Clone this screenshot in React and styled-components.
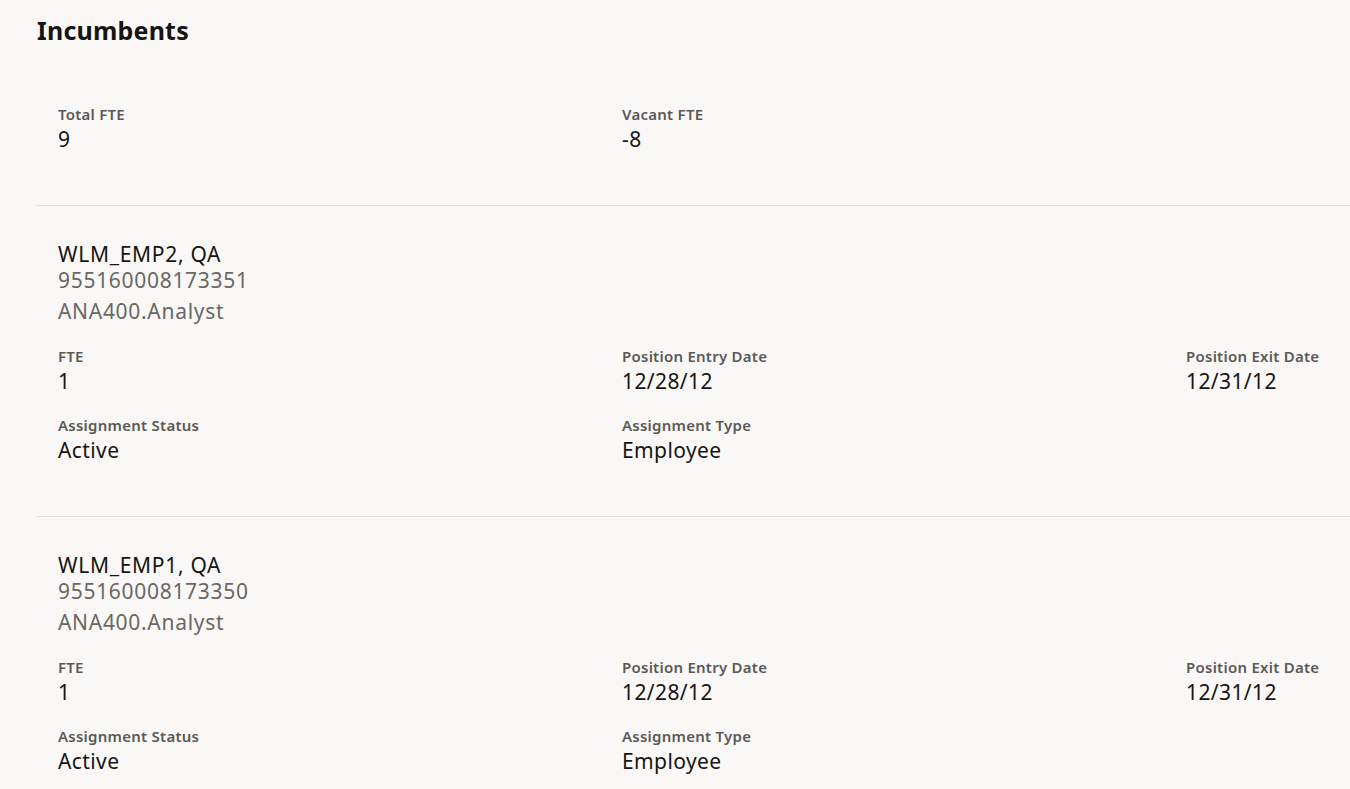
import React from 'react';
import styled, { createGlobalStyle } from 'styled-components';

const GlobalStyle = createGlobalStyle`
  html, body {
    margin: 0;
    padding: 0;
    background: #f9f8f6;
    overflow: hidden;
  }
  body {
    font-family: "Noto Sans", "Open Sans", sans-serif;
    color: #161513;
  }
`;

const Page = styled.div`
  padding: 14px 0 0 36px;
`;

const Title = styled.h1`
  margin: 0;
  font-size: 25px;
  line-height: 32px;
  font-weight: 700;
  letter-spacing: 0.2px;
  padding-left: 1px;
  color: #161513;
`;

const Section = styled.section`
  padding: ${({ top }) => top}px 0 ${({ bottom }) => bottom}px 22px;
  border-bottom: ${({ divider }) => (divider ? '1px solid #e0dedb' : 'none')};
`;

const Grid = styled.div`
  display: grid;
  grid-template-columns: 564px 564px 1fr;
  row-gap: 23px;
`;

const Field = styled.div`
  display: flex;
  flex-direction: column;
  gap: 4px;
`;

const Label = styled.div`
  font-size: 15px;
  line-height: 18px;
  font-weight: 600;
  letter-spacing: 0.25px;
  color: #5b5956;
`;

const Value = styled.div`
  font-size: 21px;
  line-height: 24px;
  letter-spacing: 0.4px;
  color: #161513;
`;

const Header = styled.div`
  display: flex;
  flex-direction: column;
  margin-bottom: 23px;
`;

const Name = styled.div`
  font-size: 21px;
  line-height: 26px;
  letter-spacing: 0.7px;
  color: ${({ muted }) => (muted ? '#6a6763' : '#161513')};
  margin-top: ${({ gap }) => gap || 0}px;
`;

const incumbents = [
  {
    name: 'WLM_EMP2, QA',
    number: '955160008173351',
    job: 'ANA400.Analyst',
  },
  {
    name: 'WLM_EMP1, QA',
    number: '955160008173350',
    job: 'ANA400.Analyst',
  },
];

const Incumbent = ({ name, number, job, divider }) => (
  <Section top={35} bottom={54} divider={divider}>
    <Header>
      <Name>{name}</Name>
      <Name muted>{number}</Name>
      <Name muted gap={5}>{job}</Name>
    </Header>
    <Grid>
      <Field>
        <Label>FTE</Label>
        <Value>1</Value>
      </Field>
      <Field>
        <Label>Position Entry Date</Label>
        <Value>12/28/12</Value>
      </Field>
      <Field>
        <Label>Position Exit Date</Label>
        <Value>12/31/12</Value>
      </Field>
      <Field>
        <Label>Assignment Status</Label>
        <Value>Active</Value>
      </Field>
      <Field>
        <Label>Assignment Type</Label>
        <Value>Employee</Value>
      </Field>
    </Grid>
  </Section>
);

const App = () => (
  <>
    <GlobalStyle />
    <Page>
      <Title>Incumbents</Title>
      <Section top={59} bottom={54} divider>
        <Grid>
          <Field>
            <Label>Total FTE</Label>
            <Value>9</Value>
          </Field>
          <Field>
            <Label>Vacant FTE</Label>
            <Value>-8</Value>
          </Field>
        </Grid>
      </Section>
      {incumbents.map((item, i) => (
        <Incumbent key={item.number} {...item} divider={i < incumbents.length - 1} />
      ))}
    </Page>
  </>
);

export default App;
